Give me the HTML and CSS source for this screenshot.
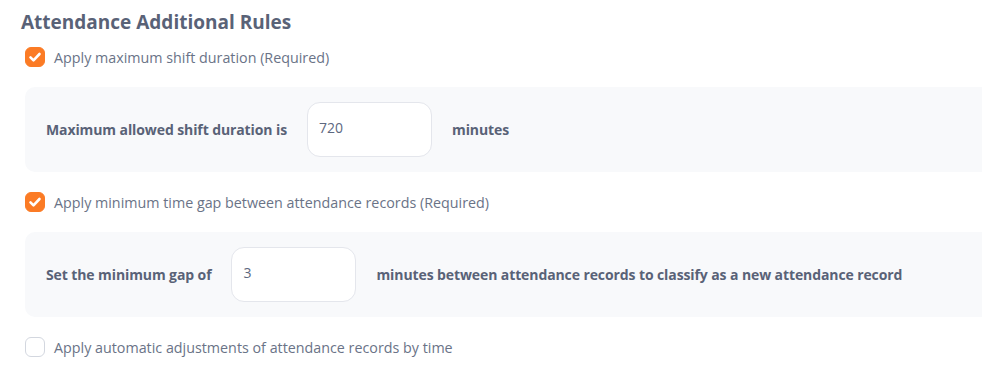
FILE: index.html
```html
<!DOCTYPE html>
<html lang="en">
<head>
  <meta charset="UTF-8" />
  <meta name="viewport" content="width=device-width, initial-scale=1.0" />
  <title>Attendance Additional Rules</title>
  <link rel="stylesheet" href="styles.css">
</head>
<body>
  <div class="section">
    <h2 class="section-title">Attendance Additional Rules</h2>

    <div class="rules">
      <label class="check-row">
        <span class="check checked">
          <svg viewBox="0 0 20 20" width="20" height="20"><path d="M5.5 10.3l3 3 6-6.3" fill="none" stroke="#fff" stroke-width="2.6" stroke-linecap="round" stroke-linejoin="round"/></svg>
        </span>
        <span class="check-text">Apply maximum shift duration (Required)</span>
      </label>

      <div class="rule-panel">
        <span class="rule-label">Maximum allowed shift duration is</span>
        <input class="rule-input" type="text" value="720" />
        <span class="rule-label">minutes</span>
      </div>

      <label class="check-row">
        <span class="check checked">
          <svg viewBox="0 0 20 20" width="20" height="20"><path d="M5.5 10.3l3 3 6-6.3" fill="none" stroke="#fff" stroke-width="2.6" stroke-linecap="round" stroke-linejoin="round"/></svg>
        </span>
        <span class="check-text">Apply minimum time gap between attendance records (Required)</span>
      </label>

      <div class="rule-panel">
        <span class="rule-label">Set the minimum gap of</span>
        <input class="rule-input" type="text" value="3" />
        <span class="rule-label">minutes between attendance records to classify as a new attendance record</span>
      </div>

      <label class="check-row">
        <span class="check"></span>
        <span class="check-text">Apply automatic adjustments of attendance records by time</span>
      </label>
    </div>
  </div>
</body>
</html>
```

FILE: styles.css
```css
:root {
  --orange: #fb7b25;
  --panel-bg: #f8f9fb;
  --text-dark: #596277;
  --text-light: #6a7387;
  --border: #e4e6ec;
}

* {
  box-sizing: border-box;
  margin: 0;
  padding: 0;
  font-family: 'Open Sans', sans-serif;
}

body {
  background: #ffffff;
  overflow: hidden;
}

.section {
  padding: 10px 0 0 21px;
}

.section-title {
  font-size: 19px;
  line-height: 24px;
  font-weight: 700;
  color: var(--text-dark);
  margin-bottom: 13px;
}

.rules {
  display: flex;
  flex-direction: column;
  gap: 20px;
  padding-left: 4px;
}

.check-row {
  display: flex;
  align-items: center;
  gap: 9px;
  height: 20px;
}

.check {
  width: 20px;
  height: 20px;
  border-radius: 6px;
  border: 1px solid #d3d7df;
  background: #fff;
  display: flex;
  flex-shrink: 0;
}

.check.checked {
  background: var(--orange);
  border-color: var(--orange);
}

.check svg {
  margin: -1px;
}

.check-text {
  font-size: 14.3px;
  color: var(--text-light);
}

.rule-panel {
  display: flex;
  align-items: center;
  gap: 20px;
  background: var(--panel-bg);
  border-radius: 10px;
  padding: 15px 21px;
  margin-right: -40px;
}

.rule-label {
  font-size: 14px;
  font-weight: 700;
  letter-spacing: -0.1px;
  color: var(--text-dark);
}

.rule-input {
  width: 125px;
  height: 55px;
  border: 1px solid var(--border);
  border-radius: 13px;
  background: #fff;
  padding: 0 11px 4px;
  font-size: 14px;
  color: #5d6880;
  outline: none;
}
```
